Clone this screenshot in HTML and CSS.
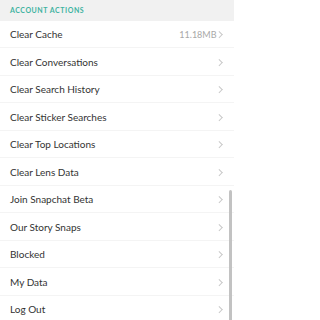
FILE: index.html
```html
<!DOCTYPE html>
<html>
<head>
<meta charset="utf-8">
<link rel="stylesheet" href="styles.css">
</head>
<body>
<div class="screen">
  <div class="section-header">ACCOUNT ACTIONS</div>
  <ul class="list">
    <li class="row"><span class="label">Clear Cache</span><span class="value">11.18MB</span><span class="chev"></span></li>
    <li class="row"><span class="label">Clear Conversations</span><span class="chev"></span></li>
    <li class="row"><span class="label">Clear Search History</span><span class="chev"></span></li>
    <li class="row"><span class="label">Clear Sticker Searches</span><span class="chev"></span></li>
    <li class="row"><span class="label">Clear Top Locations</span><span class="chev"></span></li>
    <li class="row"><span class="label">Clear Lens Data</span><span class="chev"></span></li>
    <li class="row"><span class="label">Join Snapchat Beta</span><span class="chev"></span></li>
    <li class="row"><span class="label">Our Story Snaps</span><span class="chev"></span></li>
    <li class="row"><span class="label">Blocked</span><span class="chev"></span></li>
    <li class="row"><span class="label">My Data</span><span class="chev"></span></li>
    <li class="row"><span class="label">Log Out</span><span class="chev"></span></li>
  </ul>
  <div class="scrollbar"></div>
</div>
</body>
</html>
```
FILE: styles.css
```css
* { box-sizing: border-box; }
html, body { margin: 0; padding: 0; background: #fff; }
body { font-family: Lato, "Open Sans", "Liberation Sans", sans-serif; }
.screen { position: relative; width: 234px; height: 320px; overflow: hidden; }
.section-header {
  height: 20.5px;
  background: #f1f1f1;
  color: #3fb3a1;
  font-size: 7px;
  font-weight: 700;
  letter-spacing: 0.55px;
  padding-left: 10px;
  display: flex;
  align-items: center;
}
.list { list-style: none; margin: 0; padding: 0; }
.row {
  height: 27.5px;
  display: flex;
  align-items: center;
  padding-left: 10px;
  padding-right: 12px;
  border-bottom: 1px solid #f4f4f4;
  color: #333;
  font-size: 10px;
  padding-top: 1px;
}
.label { flex: 1; }
.value { color: #a8a8a8; font-size: 9px; margin-right: 0; }
.chev {
  width: 4.5px; height: 4.5px;
  border-top: 1px solid #c8c8c8;
  border-right: 1px solid #c8c8c8;
  transform: rotate(45deg);
  margin-right: 1px;
}
.scrollbar {
  position: absolute;
  left: 229px;
  top: 190px;
  width: 2.5px;
  height: 140px;
  background: #c2c2c2;
  border-radius: 2px;
}
```
